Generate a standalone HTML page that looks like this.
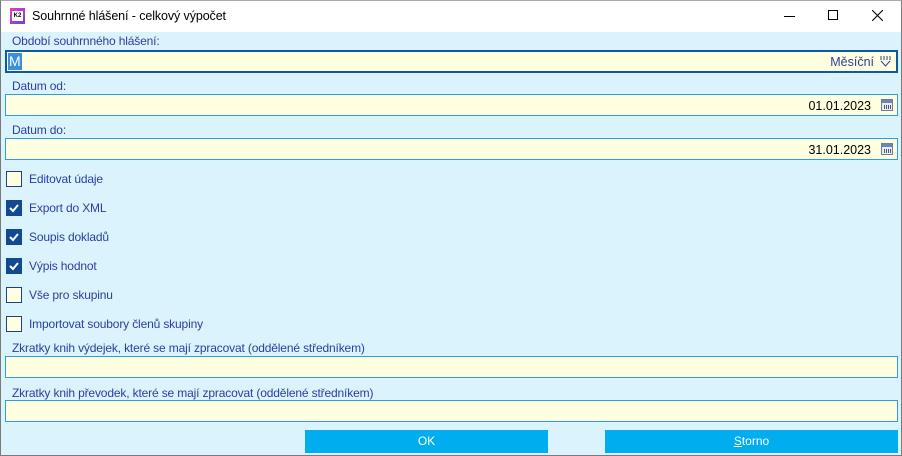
<!DOCTYPE html>
<html><head><meta charset="utf-8"><style>
*{box-sizing:border-box;margin:0;padding:0}
body{width:902px;height:456px;overflow:hidden;font-family:"Liberation Sans",sans-serif;font-size:12px;background:#fff}
.win{position:absolute;left:0;top:0;width:902px;height:456px;border:1px solid #7a7a7a;border-top:1px solid #aaa;background:#dbf3fd}
.tb{position:absolute;left:0;top:0;width:900px;height:31px;background:#fff}
.tb .t{position:absolute;left:31px;top:8px;font-size:12.5px;color:#000;letter-spacing:-0.1px}
.lbl{position:absolute;left:11px;color:#2a3f9f;font-size:12px;letter-spacing:-0.15px}
.in{position:absolute;left:4px;width:893px;height:22px;background:#ffffe0;border:1px solid #2aa0e0}
.val{position:absolute;right:26px;top:4px;color:#000;font-size:12.5px}
.cal{position:absolute;right:4px;top:4px;width:12px;height:12px;border:1px solid #6a7fa0;background:#e8eef8}
.cal:before{content:"";position:absolute;left:0;right:0;top:0;height:3px;background:#6a86b8}
.cal:after{content:"";position:absolute;left:2px;top:5px;width:7px;height:4px;background:repeating-linear-gradient(90deg,#556 0 1px,transparent 1px 2px)}
.cb{position:absolute;left:5px;width:16px;height:16px;border:1px solid #20407f;background:#ffffe0}
.cb.on{background:#124a91;border-color:#124a91}
.cl{position:absolute;left:28px;color:#2a3f9f;font-size:12px;letter-spacing:-0.15px}
.btn{position:absolute;top:429px;height:23px;background:#00adef;color:#fff;text-align:center;line-height:23px;font-size:12px}
</style></head><body><div class="win">
<div class="tb">
<div style="position:absolute;left:9px;top:7px;width:15px;height:16px;background:linear-gradient(135deg,#e040c0,#7040e0);"><div style="position:absolute;left:2px;top:3px;width:11px;height:10px;background:#fff;font-size:6px;font-weight:bold;line-height:10px;text-align:center;color:#000">K2</div></div>
<div class="t">Souhrnné hlášení - celkový výpočet</div>
<div style="position:absolute;left:783px;top:15px;width:11px;height:1px;background:#000"></div>
<div style="position:absolute;left:827px;top:9px;width:10px;height:10px;border:1px solid #000"></div>
<svg style="position:absolute;left:871px;top:9px" width="11" height="11"><path d="M0 0L11 11M11 0L0 11" stroke="#000" stroke-width="1.1"/></svg>
</div>
<div class="lbl" style="top:33px">Období souhrnného hlášení:</div>
<div class="in" style="top:49px;border:2px solid #0a5aa8;height:23px"><span style="position:absolute;left:1px;top:1px;background:#3c8ee0;color:#fff;font-size:14px;line-height:17px;padding:0 1px">M</span><span class="val" style="right:22px;top:3px;color:#2a3f9f">Měsíční</span><svg style="position:absolute;right:4px;top:4px" width="13" height="12"><path d="M1 1h11M1 3h11" stroke="#2a3f9f" stroke-dasharray="2 1"/><path d="M2 5l4.5 5 4.5-5" fill="none" stroke="#2a3f9f"/></svg></div>
<div class="lbl" style="top:78px">Datum od:</div>
<div class="in" style="top:93px"><span class="val">01.01.2023</span><span class="cal"></span></div>
<div class="lbl" style="top:122px">Datum do:</div>
<div class="in" style="top:137px"><span class="val">31.01.2023</span><span class="cal"></span></div>
<div class="cb" style="top:170px"></div><div class="cl" style="top:171px">Editovat údaje</div>
<div class="cb on" style="top:199px"><svg width="14" height="14"><path d="M3 7l3 3 5-6" fill="none" stroke="#fff" stroke-width="2"/></svg></div><div class="cl" style="top:200px">Export do XML</div>
<div class="cb on" style="top:228px"><svg width="14" height="14"><path d="M3 7l3 3 5-6" fill="none" stroke="#fff" stroke-width="2"/></svg></div><div class="cl" style="top:229px">Soupis dokladů</div>
<div class="cb on" style="top:257px"><svg width="14" height="14"><path d="M3 7l3 3 5-6" fill="none" stroke="#fff" stroke-width="2"/></svg></div><div class="cl" style="top:258px">Výpis hodnot</div>
<div class="cb" style="top:286px"></div><div class="cl" style="top:287px">Vše pro skupinu</div>
<div class="cb" style="top:315px"></div><div class="cl" style="top:316px">Importovat soubory členů skupiny</div>
<div class="lbl" style="top:340px">Zkratky knih výdejek, které se mají zpracovat (oddělené středníkem)</div>
<div class="in" style="top:355px"></div>
<div class="lbl" style="top:385px">Zkratky knih převodek, které se mají zpracovat (oddělené středníkem)</div>
<div class="in" style="top:399px"></div>
<div class="btn" style="left:304px;width:243px">OK</div>
<div class="btn" style="left:604px;width:293px"><u>S</u>torno</div>
</div></body></html>
